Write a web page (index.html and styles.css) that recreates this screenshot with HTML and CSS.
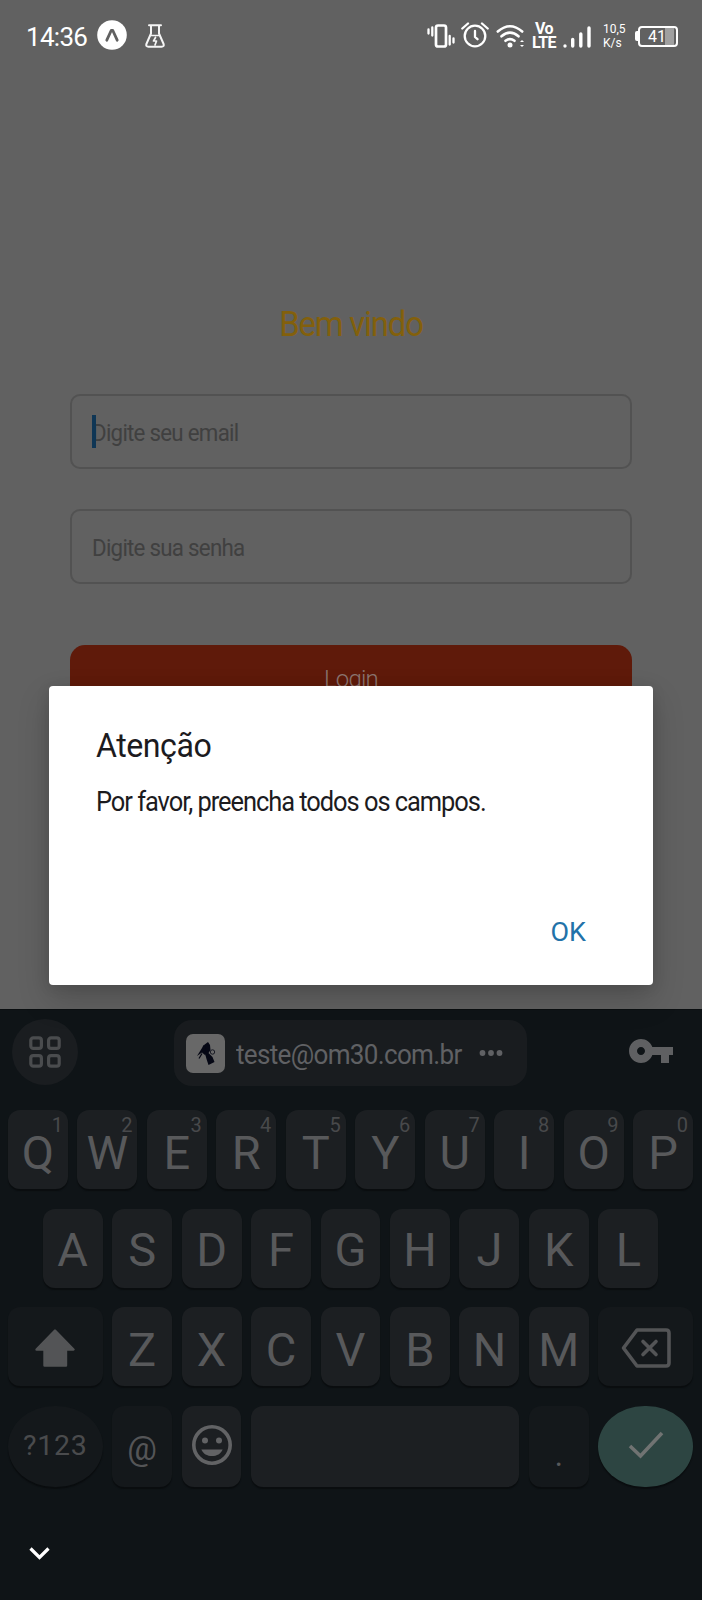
FILE: index.html
```html
<!DOCTYPE html>
<html lang="pt-BR">
<head>
<meta charset="utf-8">
<title>Login</title>
<link rel="stylesheet" href="styles.css">
</head>
<body>
<div class="phone">
  <header class="status">
    <span class="clock">14:36</span>
    <svg class="expo" width="30" height="30" viewBox="0 0 30 30"><circle cx="15" cy="15" r="14.8" fill="#fff"/><path d="M9.800 20.200L14.200 10.500h1.600L20.200 20.200" fill="none" stroke="#616161" stroke-width="2.800" stroke-linecap="round" stroke-linejoin="round"/></svg>
    <svg class="flask" width="20" height="24" viewBox="0 0 20 24" fill="none" stroke="#f5f5f5" stroke-width="2" stroke-linecap="round" stroke-linejoin="round"><path d="M4 1.200h12M6 1.500v8L1.400 20q-.7 2.700 2 2.700h13.200q2.700 0 2-2.700L14 9.500v-8"/><path d="M6 11.500h8M10.500 13.500l-2 3.500h3l-1.500 4" stroke-width="1.700"/></svg>
    <div class="signals">
      <svg width="28" height="24" viewBox="0 0 28 24" fill="none" stroke="#fff" stroke-width="2.300" stroke-linecap="round"><rect x="9" y="1.500" width="10" height="21" rx="2" stroke-width="2.700"/><path d="M1.500 5.500v4M5.300 3.500v8M22.700 12v8.500M26.500 14.500v4"/></svg>
      <svg width="28" height="26" viewBox="0 0 28 26" fill="none" stroke="#fff" stroke-width="2.300" stroke-linecap="round" stroke-linejoin="round"><circle cx="14" cy="14" r="10.300"/><path d="M14 9v6l2.500 2.200M1.300 6.500L7 1.500M26.700 6.500L21 1.500"/></svg>
      <svg width="29" height="24" viewBox="0 0 29 24" fill="none" stroke="#fff" stroke-width="2.600" stroke-linecap="round"><path d="M1.800 7.500Q14 -3 26.200 7.500M5.500 12.300q8.500-7.500 17 0M9.500 16.800q4.500-3.500 9 0"/><circle cx="14" cy="21" r="2.500" fill="#fff" stroke="none"/><path d="M24 18l2-2 2 2zM24 21l2 2 2-2z" fill="#fff" stroke="none"/></svg>
      <span class="volte"><span>Vo</span><span>LTE</span></span>
      <svg width="28" height="22" viewBox="0 0 28 22" fill="none" stroke="#fff" stroke-width="3.400" stroke-linecap="round"><path d="M2 20v0M9.700 13.500v6.500M17.800 8v12M26 2v18"/></svg>
      <span class="rate"><span>10,5</span><span>K/s</span></span>
      <span class="battery"><span class="battery-box">41</span></span>
    </div>
  </header>

  <main class="form">
    <h1 class="welcome">Bem vindo</h1>
    <div class="field"><span class="placeholder email">Digite seu email</span><i class="caret"></i></div>
    <div class="field"><span class="placeholder">Digite sua senha</span></div>
    <div class="login"><span>Login</span></div>
  </main>

  <section class="keyboard">
    <div class="toolbar">
      <span class="apps"><svg width="32" height="32" viewBox="0 0 32 32" fill="none" stroke="#4a4c4e" stroke-width="3.200"><rect x="1.800" y="1.800" width="10.600" height="10.600" rx="2.500"/><rect x="19.600" y="1.800" width="10.600" height="10.600" rx="2.500"/><rect x="1.800" y="19.600" width="10.600" height="10.600" rx="2.500"/><rect x="19.600" y="19.600" width="10.600" height="10.600" rx="2.500"/></svg></span>
      <span class="chip">
        <svg width="39" height="39" viewBox="0 0 39 39"><rect width="39" height="39" rx="7" fill="#686868"/><path d="M18 11l4-3 2 3 .5 5-2 3 4 4 2 5-6 3-2-6-1.500-5.500z" fill="#050714"/><path d="M17.500 11l2.500 1.500-.5 9-3.500-3-5 3.500 5-8z" fill="#050714"/><path d="M16 19.500l-3 5" stroke="#050714" stroke-width="1.200"/><circle cx="26.500" cy="18" r="2.200" fill="#686868" stroke="#050714" stroke-width=".8"/></svg>
        <span class="address">teste@om30.com.br</span>
        <svg width="24" height="8" viewBox="0 0 24 8" fill="#606164"><circle cx="3.500" cy="4" r="2.900"/><circle cx="12" cy="4" r="2.900"/><circle cx="20.500" cy="4" r="2.900"/></svg>
      </span>
      <svg class="key-icon" width="44" height="24" viewBox="0 0 22 12" fill="#5f6062"><path d="M11.650 4C10.830 1.670 8.610 0 6 0 2.690 0 0 2.690 0 6s2.690 6 6 6c2.610 0 4.830-1.670 5.650-4H16v4h4V8h2V4H11.650zM6 8c-1.100 0-2-.9-2-2s.9-2 2-2 2 .9 2 2-.9 2-2 2z"/></svg>
    </div>
    <div class="row"><span class="key">Q<sup>1</sup></span><span class="key">W<sup>2</sup></span><span class="key">E<sup>3</sup></span><span class="key">R<sup>4</sup></span><span class="key">T<sup>5</sup></span><span class="key">Y<sup>6</sup></span><span class="key">U<sup>7</sup></span><span class="key">I<sup>8</sup></span><span class="key">O<sup>9</sup></span><span class="key">P<sup>0</sup></span></div>
    <div class="row inset"><span class="key">A</span><span class="key">S</span><span class="key">D</span><span class="key">F</span><span class="key">G</span><span class="key">H</span><span class="key">J</span><span class="key">K</span><span class="key">L</span></div>
    <div class="row">
      <span class="key wide dim"><svg width="42" height="38" viewBox="0 0 42 38"><path d="M21 1.500L39.500 20.500H32V36.500H10.500V20.500H2.500z" fill="#535456" stroke="#535456" stroke-width="2.400" stroke-linejoin="round"/></svg></span>
      <span class="key">Z</span><span class="key">X</span><span class="key">C</span><span class="key">V</span><span class="key">B</span><span class="key">N</span><span class="key">M</span>
      <span class="key wide dim"><svg width="50" height="40" viewBox="0 0 50 40" fill="none" stroke="#535456" stroke-width="3.600" stroke-linejoin="round" stroke-linecap="round"><path d="M16 2h29q3 0 3 3v30q0 3-3 3H16L2.500 20z"/><path d="M22 13.500l13 13M35 13.500l-13 13"/></svg></span>
    </div>
    <div class="row bottom">
      <span class="key wide dim round">?123</span>
      <span class="key dim at">@</span>
      <span class="key emoji"><svg width="40" height="40" viewBox="2 2 20 20" fill="#626365"><path d="M12 2a10 10 0 1 0 0 20 10 10 0 0 0 0-20zm0 18.200a8.200 8.200 0 1 1 0-16.400 8.200 8.200 0 0 1 0 16.400z"/><circle cx="8.500" cy="9.700" r="1.500"/><circle cx="15.500" cy="9.700" r="1.500"/><path d="M6.700 14.200h10.600c-.8 2.100-2.900 3.300-5.300 3.300s-4.500-1.200-5.300-3.300z"/></svg></span>
      <span class="key space"></span>
      <span class="key dim dot">.</span>
      <span class="key wide round enter"><svg width="36" height="28" viewBox="0 0 36 28" fill="none" stroke="#707372" stroke-width="3.600"><path d="M2 15l10.500 10L34 2"/></svg></span>
    </div>
    <svg class="hide" width="21" height="13" viewBox="0 0 21 13" fill="none" stroke="#fff" stroke-width="3.200"><path d="M1.500 1.500l9 9 9-9"/></svg>
  </section>

  <section class="dialog" role="dialog">
    <h2>Atenção</h2>
    <p>Por favor, preencha todos os campos.</p>
    <div class="actions">OK</div>
  </section>
</div>
</body>
</html>
```
FILE: styles.css
```css
* { box-sizing: border-box; }
body { margin: 0; background: #616161; font-family: Roboto, "Liberation Sans", sans-serif; }
svg { display: block; flex: none; }
.phone { position: relative; width: 702px; height: 1600px; overflow: hidden; display: flex; flex-direction: column; }

.status { height: 72px; flex: none; padding: 0 24px 0 26px; display: flex; align-items: center; color: #fff; }
.clock { font-size: 26px; width: 61px; letter-spacing: -.7px; line-height: 30px; padding-top: 1px; white-space: nowrap; }
.expo { margin-left: 10px; margin-top: -2px; }
.flask { margin-left: 18px; }
.signals { margin-left: auto; display: flex; align-items: center; }
.signals > svg:nth-child(2) { margin-left: 6px; margin-top: -2px; }
.signals > svg:nth-child(3) { margin-left: 7px; }
.volte { margin-left: 6px; width: 26px; display: flex; flex-direction: column; align-items: center; font: 700 16px/14px Roboto, sans-serif; letter-spacing: -.6px; }
.signals > svg:nth-child(5) { margin-left: 6px; margin-top: 2px; }
.rate { margin-left: 12px; width: 25px; display: flex; flex-direction: column; font-size: 12px; line-height: 14px; }
.battery { margin-left: 7px; display: flex; align-items: center; }
.battery::before { content: ""; width: 3px; height: 10px; background: #fff; border-radius: 2px 0 0 2px; }
.battery-box { width: 40px; height: 21px; border: 2px solid #fff; border-radius: 4px; padding: 1px 3px 1px 1px; text-align: center; font-size: 16px; line-height: 16px; background: linear-gradient(90deg, transparent 25px, #a0a0a0 25px, #a0a0a0 34px, transparent 34px) padding-box; }

.form { width: 562px; margin: 0 auto; height: 937px; flex: none; padding-top: 229px; }
.welcome { margin: 0 0 45px; height: 48px; line-height: 48px; text-align: center; font-size: 35px; font-weight: 400; letter-spacing: -1.300px; color: #83600c; transform: scaleX(.94); }
.field { position: relative; height: 75px; border: 2px solid #525252; border-radius: 10px; margin-bottom: 39.500px; padding: 3px 0 0 20px; display: flex; align-items: center; }
.placeholder { font-size: 24px; letter-spacing: -.8px; color: #404040; white-space: nowrap; transform: scaleX(.93); transform-origin: 0 50%; }
.caret { position: absolute; left: 20px; top: 19px; width: 4px; height: 33px; background: #0f3655; }
.login { margin-top: 61px; height: 76px; border-radius: 15px; background: #5f1a0a; text-align: center; color: #8b7570; font-size: 24px; font-weight: 300; line-height: 68px; letter-spacing: -.8px; }

.keyboard { height: 591px; flex: none; background: #0f1417; display: flex; flex-direction: column; border-top: 1px solid #0a0e10; }
.toolbar { height: 100px; flex: none; padding: 9px 29px 0 12px; display: flex; align-items: flex-start; justify-content: space-between; }
.apps { width: 66px; height: 66px; border-radius: 50%; background: #1a1d20; display: flex; align-items: center; justify-content: center; }
.chip { width: 353px; height: 66px; border-radius: 18px; background: #191c1f; margin: 1px 6px 0 0; padding: 0 24px 0 12px; display: flex; align-items: center; }
.address { margin: 4px 0 0 11px; width: 243px; flex: none; font-size: 27px; letter-spacing: -.7px; color: #606164; white-space: nowrap; transform: scaleX(.965); transform-origin: 0 50%; }
.key-icon { margin-top: 20px; }
.row { display: flex; gap: 9.500px; padding: 0 9px 0 8px; height: 79px; margin-bottom: 19.500px; flex: none; }
.row.inset { padding: 0 43.700px 0 42.700px; }
.key { position: relative; flex: 1 1 0; min-width: 0; border-radius: 12px; background: #1c1f22; box-shadow: 0 2px 1px #0a0d0f; color: #58595b; display: flex; align-items: center; justify-content: center; font-size: 47px; line-height: 60px; padding-top: 6px; }
.inset .key { padding-top: 4px; }
.key sup { position: absolute; right: 5px; top: 4px; font-size: 20px; line-height: 22px; color: #48494b; }
.key.wide { flex: 0 0 94.600px; }
.key.wide svg { margin-top: -3px; }
.dim { background: #14181b; }
.bottom { height: 81.500px; }
.bottom .key { padding-top: 0; }
.bottom .round { border-radius: 47px / 41px; font-size: 28.500px; letter-spacing: .8px; color: #4a4b4d; }
.bottom .at { font-size: 33px; padding-top: 6px; color: #545557; }
.emoji svg { margin-top: -2px; }
.key.space { flex: 0 0 268.500px; }
.bottom .dot { font-size: 31px; padding-top: 20px; }
.key.enter { background: #2d4542; }
.hide { margin: 40.500px 0 0 29px; }

.dialog { position: absolute; left: 49px; top: 686px; width: 604px; height: 299px; border-radius: 4px; background: #fff; box-shadow: 0 14px 32px rgba(0,0,0,.18), 0 2px 14px rgba(0,0,0,.1); padding: 39px 67px 0 47px; display: flex; flex-direction: column; color: #1c1b1e; }
.dialog h2 { margin: 0; font-size: 34px; line-height: 40px; font-weight: 400; letter-spacing: -.5px; transform: scaleX(.945); transform-origin: 0 50%; }
.dialog p { margin: 19px 0 0; font-size: 27px; line-height: 36px; letter-spacing: -1.100px; white-space: nowrap; transform: scaleX(.942); transform-origin: 0 50%; }
.actions { margin-top: 96px; text-align: right; color: #2272a9; font-size: 25px; line-height: 34px; transform: scaleX(1.080); transform-origin: 100% 50%; }
```
